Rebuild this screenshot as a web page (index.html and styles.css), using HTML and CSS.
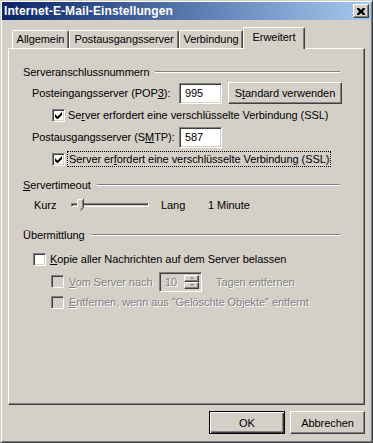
FILE: index.html
```html
<!DOCTYPE html>
<html lang="de">
<head>
  <meta charset="UTF-8" />
  <meta name="viewport" content="width=device-width, initial-scale=1.0"/>
  <title>Internet-E-Mail-Einstellungen</title>
  <link rel="stylesheet" href="styles.css">
</head>
<body>
  <div class="window">
    <div class="titlebar">
      <span class="title">Internet-E-Mail-Einstellungen</span>
      <div class="close">
        <svg width="8" height="7" viewBox="0 0 8 7">
          <path d="M0 0h2l2 2 2-2h2v1L6 3.5 8 6v1H6L4 5 2 7H0V6l2-2.5L0 1z" fill="#000"/>
        </svg>
      </div>
    </div>

    <div class="tabs">
      <div class="tab tab-general">Allgemein</div>
      <div class="tab tab-outgoing">Postausgangsserver</div>
      <div class="tab tab-connection">Verbindung</div>
      <div class="tab tab-active">Erweitert</div>
    </div>

    <div class="panel">
      <div class="group-title"><span>Serveranschlussnummern</span></div>

      <div class="row row-port">
        <span class="port-label">Posteingangsserver (POP<u>3</u>):</span>
        <div class="textbox">995</div>
        <div class="btn btn-wide">S<u>t</u>andard verwenden</div>
      </div>
      <div class="row row-check indent">
        <span class="checkbox checked"></span>
        <span class="check-text">Se<u>r</u>ver erfordert eine verschlüsselte Verbindung (SSL)</span>
      </div>

      <div class="row row-port">
        <span class="port-label">Postausgangsserver (S<u>M</u>TP):</span>
        <div class="textbox">587</div>
      </div>
      <div class="row row-check indent">
        <span class="checkbox checked"></span>
        <span class="check-text focus">Server er<u>f</u>ordert eine verschlüsselte Verbindung (SSL)</span>
      </div>

      <div class="group-title group-gap"><span><u>S</u>ervertimeout</span></div>
      <div class="row row-slider">
        <span class="slider-min">Kurz</span>
        <div class="track">
          <svg class="thumb" width="7" height="12" viewBox="0 0 7 12">
            <path d="M0.5 0.5h6v8l-3 3-3-3z" fill="#d4d0c8"/>
            <path d="M0.5 8.5v-8h5" stroke="#fff" fill="none"/>
            <path d="M6.5 0v8.5l-3 3" stroke="#404040" fill="none"/>
            <path d="M5.5 1v7l-2 2" stroke="#808080" fill="none"/>
          </svg>
        </div>
        <span class="slider-max">Lang</span>
        <span>1 Minute</span>
      </div>

      <div class="group-title group-gap-wide"><span>Übermittlung</span></div>
      <div class="row row-check row-keep">
        <span class="checkbox"></span>
        <span class="check-text"><u>K</u>opie aller Nachrichten auf dem Server belassen</span>
      </div>
      <div class="row row-days indent-sub">
        <span class="checkbox disabled"></span>
        <span class="check-text muted days-label"><u>V</u>om Server nach</span>
        <div class="spinner">
          <span class="muted">10</span>
          <div class="spin-buttons">
            <div class="spin-btn"><span class="arrow-up"></span></div>
            <div class="spin-btn"><span class="arrow-down"></span></div>
          </div>
        </div>
        <span class="muted days-after">Tagen entfernen</span>
      </div>
      <div class="row row-check indent-sub">
        <span class="checkbox disabled"></span>
        <span class="check-text muted"><u>E</u>ntfernen, wenn aus "Gelöschte Objekte" entfernt</span>
      </div>
    </div>

    <div class="actions">
      <div class="btn btn-default">OK</div>
      <div class="btn btn-cancel">Abbrechen</div>
    </div>
  </div>
</body>
</html>
```

FILE: styles.css
```css
html, body {
  margin: 0;
  padding: 0;
  background-color: #d4d0c8;
  font-family: Tahoma, "Liberation Sans", Arial, sans-serif;
  font-size: 11px;
  letter-spacing: -0.06px;
  color: #000;
}

.window {
  box-sizing: border-box;
  width: 373px;
  height: 443px;
  display: flex;
  flex-direction: column;
  padding: 1px;
  border: 1px solid;
  border-color: #d4d0c8 #404040 #404040 #d4d0c8;
  box-shadow: inset 1px 1px #fff, inset -1px -1px #808080;
  background: #d4d0c8;
}

/* title bar */
.titlebar {
  height: 18px;
  display: flex;
  align-items: center;
  justify-content: space-between;
  padding: 0 2px 0 2px;
  background: linear-gradient(to right, #0a246a, #a6caf0);
}

.title {
  color: #fff;
  font-weight: bold;
  font-size: 12px;
  letter-spacing: 0.1px;
}

.close {
  box-sizing: border-box;
  width: 16px;
  height: 14px;
  display: flex;
  align-items: center;
  justify-content: center;
  background: #d4d0c8;
  border: 1px solid;
  border-color: #fff #404040 #404040 #fff;
  box-shadow: inset -1px -1px #808080;
}

/* tabs */
.tabs {
  display: flex;
  align-items: flex-end;
  height: 21px;
  margin: 7px 6px 0 8px;
  padding-left: 2px;
}

.tab {
  box-sizing: border-box;
  height: 18px;
  padding-top: 2px;
  text-align: center;
  border: 1px solid;
  border-bottom: none;
  border-color: #fff #404040 transparent #fff;
  box-shadow: inset -1px 0 #808080;
  border-radius: 2px 2px 0 0;
  background: #d4d0c8;
}

.tab-general { width: 57px; }
.tab-outgoing { width: 110px; }
.tab-connection { width: 64px; }

.tab-active {
  position: relative;
  z-index: 1;
  width: 62px;
  height: 22px;
  margin: 0 -2px -1px 0;
  padding-top: 3px;
}

/* panel */
.panel {
  flex: 1;
  margin: 0 6px 0 6px;
  padding: 15px 0 0 14px;
  border: 1px solid;
  border-color: #fff #404040 #404040 #fff;
  box-shadow: inset -1px -1px #808080;
}

.group-title {
  display: flex;
  align-items: center;
  height: 15px;
  margin-right: 24px;
}

.group-title::after {
  content: "";
  flex: 1;
  margin-left: 6px;
  border-top: 1px solid #808080;
  border-bottom: 1px solid #fff;
}

.group-gap { margin-top: 10px; }
.group-gap-wide { margin-top: 14px; }

.row {
  display: flex;
  align-items: center;
}

.row-port {
  height: 22px;
  margin: 3px 0 0 9px;
}

.row-check {
  height: 16px;
  margin-top: 3px;
}

.indent { margin-left: 29px; }
.indent-sub { margin-left: 28px; margin-top: 2px; }
.row-keep { margin: 9px 0 0 10px; }

.port-label { width: 147px; }

.textbox {
  box-sizing: border-box;
  width: 43px;
  height: 21px;
  padding: 3px 0 0 5px;
  background: #fff;
  border: 1px solid;
  border-color: #808080 #fff #fff #808080;
  box-shadow: inset 1px 1px #404040, inset -1px -1px #d4d0c8;
}

.btn {
  box-sizing: border-box;
  height: 23px;
  display: flex;
  align-items: center;
  justify-content: center;
  background: #d4d0c8;
  border: 1px solid;
  border-color: #fff #404040 #404040 #fff;
  box-shadow: inset -1px -1px #808080;
}

.btn-wide {
  width: 114px;
  height: 22px;
  margin-left: 6px;
}

/* checkboxes */
.checkbox {
  box-sizing: border-box;
  width: 13px;
  height: 13px;
  flex: none;
  display: flex;
  align-items: center;
  justify-content: center;
  background: #fff;
  border: 1px solid;
  border-color: #808080 #fff #fff #808080;
  box-shadow: inset 1px 1px #404040, inset -1px -1px #d4d0c8;
}

.checkbox.checked::after {
  content: "";
  width: 7px;
  height: 7px;
  background: url("data:image/svg+xml,%3Csvg xmlns='http://www.w3.org/2000/svg' width='7' height='7'%3E%3Cpath d='M0 2v3l2 2h1l4-4V0L2.5 4.5z' fill='%23000'/%3E%3C/svg%3E") no-repeat;
}

.checkbox.disabled { background: #d4d0c8; }

.check-text { margin-left: 3px; }
.row-keep .check-text { margin-left: 4px; }
.indent-sub .check-text { margin-left: 5px; }

.focus {
  margin-left: 3px;
  padding: 0 1px;
  outline: 1px dotted #000;
  outline-offset: 0;
  line-height: 14px;
}

.muted {
  color: #808080;
  text-shadow: 1px 1px #fff;
}

/* slider */
.row-slider {
  height: 16px;
  margin: 5px 0 0 11px;
}

.slider-min { width: 37px; }
.slider-max { width: 47px; margin-left: 12px; }

.track {
  position: relative;
  width: 78px;
  height: 4px;
  box-sizing: border-box;
  border: 1px solid;
  border-color: #808080 #fff #fff #808080;
  box-shadow: inset 1px 1px #404040;
}

.thumb {
  position: absolute;
  left: 5px;
  top: -5px;
}

/* days spinner */
.row-days {
  height: 21px;
  margin-top: 4px;
}

.days-label { width: 90px; }

.spinner {
  box-sizing: border-box;
  width: 43px;
  height: 20px;
  display: flex;
  justify-content: space-between;
  padding: 2px 2px 2px 5px;
  border: 1px solid;
  border-color: #808080 #fff #fff #808080;
  box-shadow: inset 1px 1px #404040, inset -1px -1px #d4d0c8;
}

.spinner > span { padding-top: 1px; }

.spin-buttons {
  display: flex;
  flex-direction: column;
  width: 15px;
}

.spin-btn {
  box-sizing: border-box;
  flex: 1;
  display: flex;
  align-items: center;
  justify-content: center;
  border: 1px solid;
  border-color: #fff #404040 #404040 #fff;
  box-shadow: inset -1px -1px #808080;
}

.arrow-up, .arrow-down {
  width: 0;
  height: 0;
  border-left: 2px solid transparent;
  border-right: 2px solid transparent;
}

.arrow-up { border-bottom: 2px solid #808080; }
.arrow-down { border-top: 2px solid #808080; }

.days-after { margin-left: 14px; }

/* dialog buttons */
.actions {
  display: flex;
  justify-content: flex-end;
  gap: 5px;
  margin: 6px 6px 7px 0;
}

.btn-default {
  width: 76px;
  border-color: #000;
  box-shadow: inset 1px 1px #fff, inset -1px -1px #404040, inset -2px -2px #808080;
}

.btn-cancel { width: 75px; }
```
